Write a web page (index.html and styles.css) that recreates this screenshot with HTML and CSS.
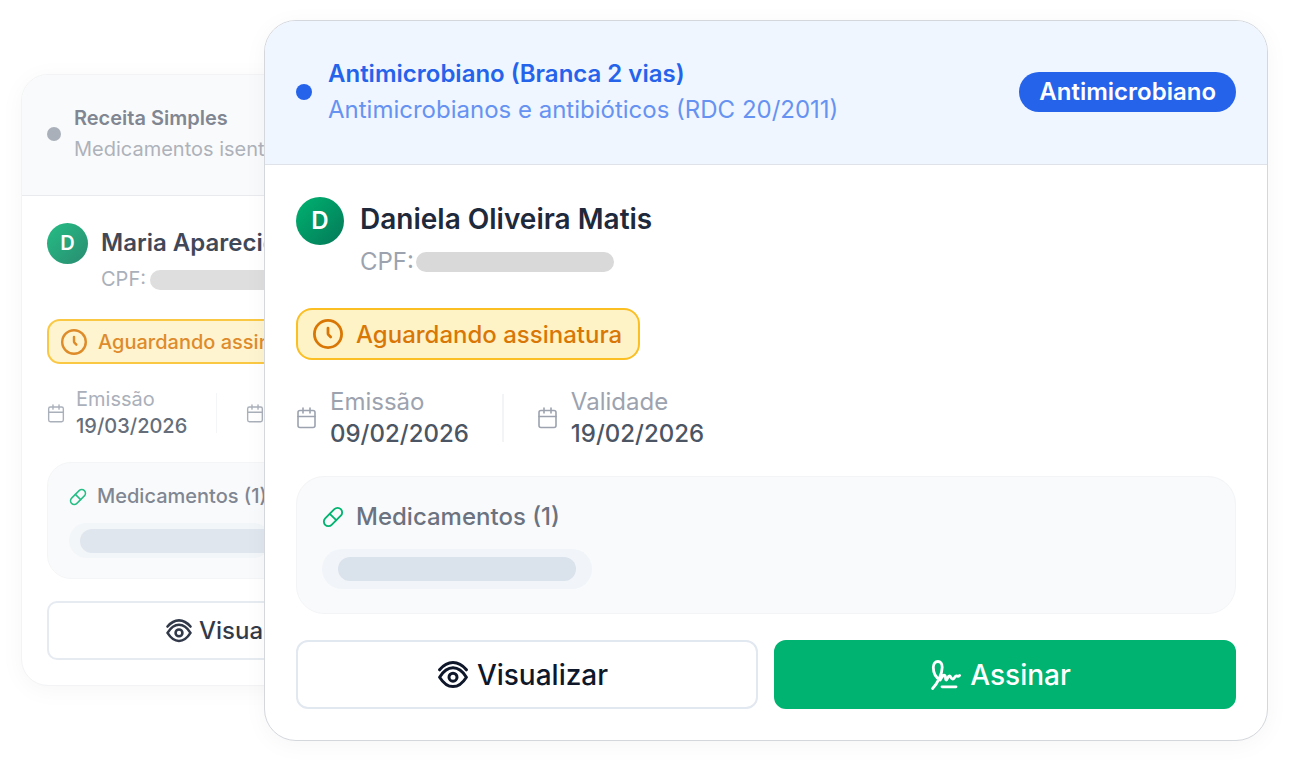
FILE: index.html
```html
<!DOCTYPE html>
<html lang="pt-BR">
<head>
    <meta charset="UTF-8">
    <meta name="viewport" content="width=device-width, initial-scale=1.0">
    <title>Receitas</title>
    <link rel="stylesheet" href="styles.css">
</head>
<body>
    <!-- Shared icons -->
    <svg class="sprite" aria-hidden="true">
        <symbol id="icon-clock" viewBox="0 0 30 30">
            <circle cx="15" cy="15" r="13.6"/>
            <path d="M15 9.200v5.300q0 .8.500 1.300l2.200 2.200"/>
        </symbol>
        <symbol id="icon-calendar" viewBox="0 0 20 22">
            <rect x="1.5" y="3.5" width="17" height="17" rx="2"/>
            <path d="M1.5 9.5h17M6.5 1v5M13.5 1v5"/>
        </symbol>
        <symbol id="icon-pill" viewBox="0 0 24 24">
            <path d="m10.5 20.5 10-10a4.95 4.95 0 1 0-7-7l-10 10a4.95 4.95 0 1 0 7 7Z"/>
            <path d="m8.5 8.5 7 7"/>
        </symbol>
        <symbol id="icon-eye" viewBox="0 0 30 28">
            <path d="M1.6 8.800C5.500 4.200 10 1.600 15 1.600s9.500 2.600 13.400 7.200"/>
            <path d="M1.600 16.200C5.500 10 10 6.800 15 6.800s9.500 3.200 13.400 9.400C24.500 22.400 20 25.600 15 25.600S5.500 22.400 1.600 16.200Z"/>
            <circle cx="15" cy="16.200" r="4"/>
        </symbol>
        <symbol id="icon-sign" viewBox="0 0 30 30">
            <path d="M1.600 28.500C6.500 23.500 11.200 14.500 11.200 7.200 11.200 3.400 9.400 1.500 6.900 1.500 4.200 1.500 2.300 3.800 2.300 7.200c0 5.400 2.700 10.400 6.900 12.900C10.400 17 12.400 15 13.700 15.300c1.500.3.100 4.600 1.600 4.700 1.200.1 1.400-4 3.200-4 1.600 0 1.200 3 3.200 3 1.800 0 2-3 3.700-3 1.300 0 1.500 1 3.200-.6"/>
            <path d="M11 26.800h14"/>
        </symbol>
    </svg>

    <main class="stage">
        <article class="card card-back">
            <header class="card-header">
                <span class="dot"></span>
                <div class="card-heading">
                    <h2>Receita Simples</h2>
                    <p>Medicamentos isentos</p>
                </div>
            </header>
            <div class="card-body">
                <div class="patient">
                    <span class="avatar">D</span>
                    <div>
                        <h3>Maria Aparecida</h3>
                        <p class="cpf">CPF: <span class="cpf-mask"></span></p>
                    </div>
                </div>
                <div class="status">
                    <svg class="icon icon-clock"><use href="#icon-clock"/></svg>
                    Aguardando assinatura
                </div>
                <div class="dates">
                    <div class="date">
                        <svg class="icon icon-calendar"><use href="#icon-calendar"/></svg>
                        <dl>
                            <dt>Emissão</dt>
                            <dd>19/03/2026</dd>
                        </dl>
                    </div>
                    <span class="divider"></span>
                    <div class="date">
                        <svg class="icon icon-calendar"><use href="#icon-calendar"/></svg>
                    </div>
                </div>
                <section class="meds">
                    <h4><svg class="icon icon-pill"><use href="#icon-pill"/></svg>Medicamentos (1)</h4>
                    <div class="med"><span class="med-mask"></span></div>
                </section>
                <div class="actions">
                    <button type="button" class="btn"><svg class="icon icon-eye"><use href="#icon-eye"/></svg>Visualizar</button>
                    <button type="button" class="btn btn-primary"><svg class="icon icon-sign"><use href="#icon-sign"/></svg>Assinar</button>
                </div>
            </div>
        </article>

        <article class="card card-front">
            <header class="card-header">
                <span class="dot"></span>
                <div class="card-heading">
                    <h2>Antimicrobiano (Branca 2 vias)</h2>
                    <p>Antimicrobianos e antibióticos (RDC 20/2011)</p>
                </div>
                <span class="tag">Antimicrobiano</span>
            </header>
            <div class="card-body">
                <div class="patient">
                    <span class="avatar">D</span>
                    <div>
                        <h3>Daniela Oliveira Matis</h3>
                        <p class="cpf">CPF: <span class="cpf-mask"></span></p>
                    </div>
                </div>
                <div class="status">
                    <svg class="icon icon-clock"><use href="#icon-clock"/></svg>
                    Aguardando assinatura
                </div>
                <div class="dates">
                    <div class="date">
                        <svg class="icon icon-calendar"><use href="#icon-calendar"/></svg>
                        <dl>
                            <dt>Emissão</dt>
                            <dd>09/02/2026</dd>
                        </dl>
                    </div>
                    <span class="divider"></span>
                    <div class="date">
                        <svg class="icon icon-calendar"><use href="#icon-calendar"/></svg>
                        <dl>
                            <dt>Validade</dt>
                            <dd>19/02/2026</dd>
                        </dl>
                    </div>
                </div>
                <section class="meds">
                    <h4><svg class="icon icon-pill"><use href="#icon-pill"/></svg>Medicamentos (1)</h4>
                    <div class="med"><span class="med-mask"></span></div>
                </section>
                <div class="actions">
                    <button type="button" class="btn"><svg class="icon icon-eye"><use href="#icon-eye"/></svg>Visualizar</button>
                    <button type="button" class="btn btn-primary"><svg class="icon icon-sign"><use href="#icon-sign"/></svg>Assinar</button>
                </div>
            </div>
        </article>
    </main>
</body>
</html>
```
FILE: styles.css
```css
* {
    box-sizing: border-box;
}
body {
    margin: 0;
    font-family: Inter, "Liberation Sans", sans-serif;
    background: #fff;
    color: #1e293b;
}
h2, h3, h4, p, dl, dd {
    margin: 0;
}
.sprite {
    display: none;
}

/* Both cards share one grid cell, the front one shifted right */
.stage {
    display: grid;
    align-items: start;
    padding: 20px 25px 28px 21px;
}
.card {
    grid-area: 1 / 1;
    background: #fff;
    border: 1px solid #d4d7dc;
    overflow: hidden;
}
.card-front {
    --text: 24px;
    --line: 32px;
    --pad: 31px;
    --gap: 26px;
    margin-left: 243px;
    border-radius: 32px;
    box-shadow: 0 4px 24px rgba(0, 0, 0, 0.04);
    z-index: 1;
}
.card-back {
    --text: 20px;
    --line: 27px;
    --pad: 25px;
    --gap: 22px;
    margin: 54px 396px 0 0;
    border-color: #f1f2f4;
    border-radius: 27px;
    box-shadow: 0 4px 24px rgba(0, 0, 0, 0.04);
    opacity: 0.85;
}

.card-header {
    display: flex;
    align-items: center;
    gap: 16px;
    padding: 35px var(--pad) 36px;
    background: #eff6ff;
    border-bottom: 1px solid #dfe2e8;
}
.card-back .card-header {
    gap: 13px;
    padding: 28px var(--pad) 30px;
    background: #f9fafb;
    border-color: #e5e7eb;
}
.dot {
    width: 16px;
    height: 16px;
    border-radius: 50%;
    background: #2563eb;
}
.card-back .dot {
    width: 14px;
    height: 14px;
    background: #9ca3af;
}
.card-heading {
    flex: 1;
    font-size: var(--text);
    line-height: 36px;
    color: #2563eb;
}
.card-heading h2 {
    font-size: inherit;
    font-weight: 600;
}
.card-heading p {
    color: #6692f1;
}
.card-back .card-heading {
    line-height: 31px;
    color: #6b7280;
}
.card-back .card-heading p {
    color: #a0a5af;
}
.tag {
    padding: 0 20px;
    border-radius: 20px;
    background: #2563eb;
    color: #fff;
    font-size: 24px;
    font-weight: 600;
    line-height: 40px;
}

.card-body {
    display: flex;
    flex-direction: column;
    gap: var(--gap);
    padding: 32px var(--pad) var(--pad);
}
.card-back .card-body {
    padding-top: 27px;
}
.patient {
    display: flex;
    gap: 16px;
}
.card-back .patient {
    gap: 13px;
}
.avatar {
    width: 48px;
    height: 48px;
    border-radius: 50%;
    background: linear-gradient(135deg, #00b371, #047857);
    color: #fff;
    font-size: 24px;
    font-weight: 600;
    line-height: 48px;
    text-align: center;
}
.card-back .avatar {
    width: 41px;
    height: 41px;
    font-size: 20px;
    line-height: 40px;
}
.patient h3 {
    font-size: 28px;
    font-weight: 600;
    line-height: 45px;
}
.card-back .patient h3 {
    font-size: 24px;
    line-height: 39px;
}
.cpf {
    display: flex;
    align-items: center;
    gap: 2px;
    font-size: var(--text);
    line-height: 40px;
    color: #9ca3af;
}
.card-back .cpf {
    gap: 4px;
    line-height: 35px;
}
.cpf-mask {
    width: 198px;
    height: 20px;
    border-radius: 10px;
    background: #d9d9d9;
}

.status {
    display: flex;
    align-items: center;
    align-self: flex-start;
    gap: 13px;
    height: 52px;
    padding: 0 16px 0 15px;
    border: 2px solid #fbbf24;
    border-radius: 16px;
    background: #fef3c7;
    color: #d97706;
    font-size: var(--text);
    font-weight: 500;
}
.card-back .status {
    gap: 11px;
    height: 45px;
    padding: 0 12px;
    border-radius: 13px;
}
.icon {
    flex: none;
    fill: none;
    stroke: currentColor;
    stroke-linecap: round;
    stroke-linejoin: round;
}
.icon-clock {
    width: 30px;
    height: 30px;
    stroke-width: 2.8;
}
.card-back .icon-clock {
    width: 26px;
    height: 26px;
}

.dates {
    display: flex;
    align-items: center;
    gap: 33px;
    font-size: var(--text);
    line-height: var(--line);
}
.card-back .dates {
    gap: 29px;
}
.date {
    display: flex;
    align-items: center;
    gap: 13px;
    color: #9ca3af;
}
.card-back .date {
    gap: 11px;
}
.date dd {
    color: #4b5563;
    font-weight: 500;
}
.icon-calendar {
    width: 21px;
    height: 22px;
    stroke-width: 1.6;
}
.card-back .icon-calendar {
    width: 18px;
    height: 19px;
}
.divider {
    width: 2px;
    height: 48px;
    background: #f3f4f6;
}
.card-back .divider {
    width: 1px;
    height: 40px;
}

.meds {
    padding: 24px 25px;
    border: 1px solid #f3f4f6;
    border-radius: 28px;
    background: #f9fafb;
}
.card-back .meds {
    padding: 20px 21px;
    border-radius: 24px;
}
.meds h4 {
    display: flex;
    align-items: center;
    gap: 12px;
    margin-bottom: 16px;
    font-size: var(--text);
    font-weight: 500;
    line-height: var(--line);
    color: #6b7280;
}
.card-back .meds h4 {
    gap: 10px;
    margin-bottom: 13px;
}
.icon-pill {
    width: 22px;
    height: 22px;
    color: #00b371;
    stroke-width: 2;
}
.card-back .icon-pill {
    width: 18px;
    height: 18px;
}
.med {
    display: flex;
    align-items: center;
    width: 270px;
    height: 40px;
    padding: 0 16px;
    border-radius: 20px;
    background: #f1f5f9;
}
.card-back .med {
    width: 202px;
    height: 35px;
    padding: 0 11px;
}
.med-mask {
    flex: none;
    width: 238px;
    height: 24px;
    border-radius: 12px;
    background: #dae2eb;
}

.actions {
    display: grid;
    grid-template-columns: 1fr 1fr;
    gap: 16px;
}
.btn {
    display: flex;
    align-items: center;
    justify-content: center;
    gap: 9px;
    height: 69px;
    padding: 0 8px 0 0;
    border: 2px solid #e2e8f0;
    border-radius: 12px;
    background: #fff;
    color: #0f172a;
    font-family: inherit;
    font-size: 28px;
    font-weight: 500;
    cursor: pointer;
}
.btn-primary {
    border-color: #00b371;
    background: #00b371;
    color: #fff;
}
.card-back .btn {
    gap: 7px;
    height: 59px;
    border-radius: 10px;
    font-size: 24px;
}
.icon-eye {
    width: 30px;
    height: 28px;
    stroke-width: 3;
}
.card-back .icon-eye {
    width: 26px;
    height: 24px;
}
.icon-sign {
    width: 30px;
    height: 30px;
    stroke-width: 2.8;
}
```
